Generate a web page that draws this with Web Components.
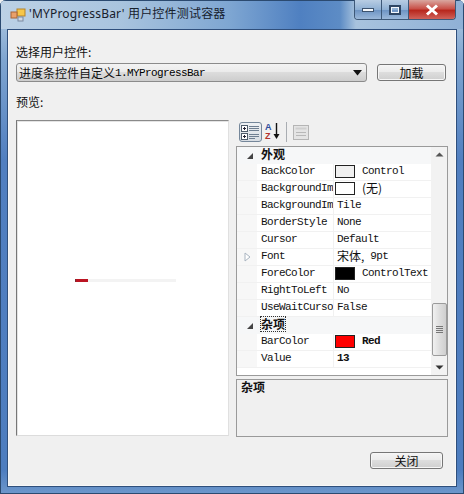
<!DOCTYPE html>
<html>
<head>
<meta charset="utf-8">
<title>MYProgressBar</title>
<style>
html, body { margin: 0; padding: 0; background: #f0f0f0; }
body { font: 11px "Liberation Mono", "Noto Sans CJK SC", monospace; letter-spacing: -0.6px; color: #000; }
</style>
</head>
<body>
<test-window>
  <span slot="title">'MYProgressBar' 用户控件测试容器</span>
  <zh-text style="display:block;height:14px">选择用户控件:</zh-text>
  <div style="display:flex;gap:10px;height:19px;margin-top:4px;padding-right:2px">
    <combo-box><zh-text>进度条控件自定义</zh-text>1.MYProgressBar</combo-box>
    <win-button style="width:69px;margin-top:1px;height:17px">加载</win-button>
  </div>
  <zh-text style="margin-top:13px;display:block;height:14px">预览:</zh-text>
  <div style="display:flex;gap:7px;height:316px;margin-top:11px">
    <preview-pane><progress-line value="13"></progress-line></preview-pane>
    <div style="width:212px;display:flex;flex-direction:column">
      <grid-toolbar></grid-toolbar>
      <prop-grid>
        <prop-cat open>外观</prop-cat>
        <prop-row name="BackColor" swatch="#f0f0f0">Control</prop-row>
        <prop-row name="BackgroundIm" swatch="#ffffff"><zh-text>(无)</zh-text></prop-row>
        <prop-row name="BackgroundIm">Tile</prop-row>
        <prop-row name="BorderStyle">None</prop-row>
        <prop-row name="Cursor">Default</prop-row>
        <prop-row name="Font" expand><zh-text>宋体,</zh-text> 9pt</prop-row>
        <prop-row name="ForeColor" swatch="#000000">ControlText</prop-row>
        <prop-row name="RightToLeft">No</prop-row>
        <prop-row name="UseWaitCurso">False</prop-row>
        <prop-cat open focus>杂项</prop-cat>
        <prop-row name="BarColor" swatch="#ff0000" strong>Red</prop-row>
        <prop-row name="Value" strong>13</prop-row>
      </prop-grid>
      <help-pane><zh-text style="font-weight:700">杂项</zh-text></help-pane>
    </div>
  </div>
  <div style="display:flex;justify-content:flex-end;margin-top:16px;padding-right:5px">
    <win-button style="width:73px;height:17px">关闭</win-button>
  </div>
</test-window>

<script>
const ZH = '"Noto Sans CJK SC", "Noto Sans", sans-serif';

class ZhText extends HTMLElement {
  constructor() {
    super();
    this.attachShadow({ mode: 'open' });
    this.shadowRoot.innerHTML = `<style>:host{font:12px/14px ${ZH};letter-spacing:0;color:#111}</style><slot></slot>`;
  }
}
customElements.define('zh-text', ZhText);

class TestWindow extends HTMLElement {
  constructor() {
    super();
    this.attachShadow({ mode: 'open' });
    this.shadowRoot.innerHTML = `
<style>
:host {
  display: flex; flex-direction: column;
  width: 464px; height: 494px; box-sizing: border-box;
  background: linear-gradient(180deg, #b7cee4 0, #7fa5d0 60px, #517fc0 160px, #4d7dbf 470px, #6d97cb 100%);
  box-shadow: inset 0 0 0 1px #2b4a70;
  border-radius: 6px 6px 0 0;
  overflow: hidden;
}
#bar {
  height: 29px; flex: none; display: flex; align-items: flex-start;
  background: linear-gradient(90deg, #bcd1e5 0, #a9c4de 120px, #7ea6d2 230px, #4f80c1 300px, #5d8cc5 340px, #a8c3de 356px, #8fb0d6 100%);
  box-shadow: inset 1px 0 0 #2b4a70, inset -1px 0 0 #2b4a70, inset 0 1px 0 #2b4a70;
}
#icon { margin: 8px 0 0 10px; flex: none; }
#title { margin: 7px 0 0 3px; font: 12px/14px "Noto Sans", ${ZH}; letter-spacing: 0.2px; color: #16202c; white-space: nowrap; }
#ctl { margin: 0 8px 0 auto; display: flex; height: 20px; border: 1px solid #3d5878; border-top: 0; border-radius: 0 0 4px 4px; overflow: hidden; box-sizing: border-box; }
#ctl div { height: 100%; display: flex; align-items: center; justify-content: center; box-sizing: border-box; }
#min, #max { width: 27px; background: linear-gradient(180deg, #b8cde3, #8fb0d4 50%, #6f95c4 55%, #9bb8da); border-right: 1px solid #3d5878; }
#close { width: 46px; background: linear-gradient(180deg, #d9a7a0, #c9524a 45%, #b8281e 55%, #d0625a); }
#client {
  flex: 1; margin: 0 7px 7px 7px; border: 1px solid #2f4f7c; background: #f0f0f0;
  padding: 15px 0 0 8px; box-sizing: border-box; display: flex; flex-direction: column;
  box-shadow: inset -1px -1px 0 #f8f8f8, inset 1px 0 0 #f6f6f6;
  height: 458px; width: 450px;
}
.content { width: 432px; }
</style>
<div id="bar">
  <svg id="icon" width="16" height="14" viewBox="0 0 16 14">
    <rect x="7" y="1" width="8" height="7" fill="#f6c648" stroke="#b5832a"/>
    <rect x="1" y="4" width="6" height="6" fill="#e9a06a" stroke="#a76436"/>
    <rect x="8" y="9" width="5" height="4" fill="#cfd8e4" stroke="#7b8a9f"/>
  </svg>
  <div id="title"><slot name="title"></slot></div>
  <div id="ctl">
    <div id="min"><svg width="12" height="6"><rect x="0.5" y="1.5" width="11" height="3" fill="#f4f7fb" stroke="#3c536f"/></svg></div>
    <div id="max"><svg width="12" height="10"><rect x="1" y="1" width="10" height="8" fill="none" stroke="#2f4664" stroke-width="2"/><rect x="2.5" y="2.5" width="7" height="5" fill="none" stroke="#f2f6fb"/></svg></div>
    <div id="close"><svg width="14" height="12"><path d="M2 1.5 L12 10.5 M12 1.5 L2 10.5" stroke="#fff" stroke-width="3"/></svg></div>
  </div>
</div>
<div id="client"><div class="content"><slot></slot></div></div>`;
  }
}
customElements.define('test-window', TestWindow);

class ComboBox extends HTMLElement {
  constructor() {
    super();
    this.attachShadow({ mode: 'open' });
    this.shadowRoot.innerHTML = `
<style>
:host {
  display: flex; align-items: center; flex: none; width: 351px; height: 19px; box-sizing: border-box;
  border: 1px solid #8b8b8b; border-radius: 3px; padding-left: 2px; white-space: nowrap;
  background: linear-gradient(180deg, #f3f3f3 0, #ebebeb 45%, #dcdcdc 50%, #cdcdcd 100%);
}
svg { margin-left: auto; margin-right: 4px; }
</style><slot></slot><svg width="9" height="6"><path d="M0 0 H9 L4.5 5.5 Z" fill="#111"/></svg>`;
  }
}
customElements.define('combo-box', ComboBox);

class WinButton extends HTMLElement {
  constructor() {
    super();
    this.attachShadow({ mode: 'open' });
    this.shadowRoot.innerHTML = `
<style>
:host {
  display: flex; align-items: center; justify-content: center; flex: none; box-sizing: border-box;
  border: 1px solid #767676; border-radius: 3px;
  font: 12px/14px ${ZH}; letter-spacing: 0; color: #111;
  background: linear-gradient(180deg, #f4f4f4 0, #ececec 45%, #dddddd 50%, #cfcfcf 100%);
  box-shadow: inset 0 0 0 1px #f6f6f6;
}
</style><slot></slot>`;
  }
}
customElements.define('win-button', WinButton);

class PreviewPane extends HTMLElement {
  constructor() {
    super();
    this.attachShadow({ mode: 'open' });
    this.shadowRoot.innerHTML = `
<style>
:host {
  display: block; width: 213px; height: 316px; flex: none; box-sizing: border-box; background: #fff;
  border: 1px solid; border-color: #8a8a8a #e0e0e0 #dcdcdc #777;
  box-shadow: inset 1px 1px 0 #e4e4e4;
  padding: 158px 0 0 58px;
}
</style><slot></slot>`;
  }
}
customElements.define('preview-pane', PreviewPane);

class ProgressLine extends HTMLElement {
  constructor() {
    super();
    this.attachShadow({ mode: 'open' });
    this.shadowRoot.innerHTML = `
<style>
:host { display: block; width: 101px; height: 3px; background: #f3f3f3; }
#fill { height: 100%; background: #bb1422; border-left: 1px solid #7d2a30; box-sizing: border-box; }
</style><div id="fill"></div>`;
  }
  connectedCallback() {
    this.shadowRoot.querySelector('#fill').style.width = this.getAttribute('value') + '%';
  }
}
customElements.define('progress-line', ProgressLine);

class GridToolbar extends HTMLElement {
  constructor() {
    super();
    this.attachShadow({ mode: 'open' });
    this.shadowRoot.innerHTML = `
<style>
:host { display: flex; align-items: flex-start; height: 26px; flex: none; padding: 2px 0 0 3px; box-sizing: border-box; }
#cat { width: 23px; height: 20px; box-sizing: border-box; border: 1px solid #75879a; border-radius: 3px; background: linear-gradient(180deg, #eef1f4, #d8dde3); display: flex; align-items: center; justify-content: center; }
#az { width: 17px; height: 20px; margin-left: 2px; position: relative; font: 700 9px/9px "Liberation Sans", sans-serif; letter-spacing: 0; padding-top: 1px; box-sizing: border-box; }
#az b { display: block; padding-left: 1px; height: 9px; overflow: hidden; }
#az b:first-child { color: #2d4c9c; } #az b:nth-child(2) { color: #b3332c; }
#az svg { position: absolute; left: 9px; top: 1px; }
#sep { width: 1px; height: 20px; background: #a9adb2; margin: 0 6px 0 5px; }
#off { margin-top: 3px; }
</style>
<div id="cat"><svg width="19" height="16" viewBox="0 0 19 16">
  <rect x="0.5" y="1.5" width="6" height="6" fill="#fff" stroke="#4f5c6b"/><path d="M2 4.5h3M3.5 3v3" stroke="#223"/>
  <rect x="0.5" y="9.5" width="6" height="6" fill="#fff" stroke="#4f5c6b"/><path d="M2 12.5h3M3.5 11v3" stroke="#223"/>
  <path d="M8 2.5h10M8 4.5h10M8 6.5h10M8 10.5h10M8 12.5h10M8 14.5h6" stroke="#6f7f91"/>
</svg></div>
<div id="az"><b>A</b><b>Z</b><svg width="7" height="17"><path d="M3.5 0 V13" stroke="#111" stroke-width="1.4"/><path d="M0.5 11 H6.5 L3.5 16 Z" fill="#111"/></svg></div>
<div id="sep"></div>
<svg id="off" width="16" height="15"><rect x="0.5" y="0.5" width="15" height="14" fill="#e4e4e4" stroke="#b5b5b5"/><rect x="2.5" y="2.5" width="11" height="2" fill="#cfcfcf"/><path d="M3 7.5h10M3 10.5h10" stroke="#b8b8b8"/></svg>`;
  }
}
customElements.define('grid-toolbar', GridToolbar);

class PropGrid extends HTMLElement {
  constructor() {
    super();
    this.attachShadow({ mode: 'open' });
    this.shadowRoot.innerHTML = `
<style>
:host { display: flex; height: 230px; flex: none; box-sizing: border-box; border: 1px solid #9a9a9a; background: #fff; width: 212px; }
#rows { width: 194px; flex: none; }
#bar { width: 16px; flex: none; background: #f2f2f2; display: flex; flex-direction: column; align-items: center; }
#up { margin-top: 5px; }
#thumb { width: 15px; height: 53px; margin-top: 146px; box-sizing: border-box; border: 1px solid #9b9b9b; border-radius: 2px; background: linear-gradient(90deg, #f1f1f1, #dedede 50%, #cfcfcf); display: flex; align-items: center; justify-content: center; }
#down { margin-top: 9px; }
</style>
<div id="rows"><slot></slot></div>
<div id="bar">
  <svg id="up" width="9" height="5"><path d="M0.5 4.5 H8.5 L4.5 0.5 Z" fill="#555"/></svg>
  <div id="thumb"><svg width="9" height="9"><path d="M1 1.5h7M1 3.5h7M1 5.5h7M1 7.5h7" stroke="#777"/></svg></div>
  <svg id="down" width="9" height="5"><path d="M0.5 0.5 H8.5 L4.5 4.5 Z" fill="#333"/></svg>
</div>`;
  }
}
customElements.define('prop-grid', PropGrid);

class PropCat extends HTMLElement {
  constructor() {
    super();
    this.attachShadow({ mode: 'open' });
    this.shadowRoot.innerHTML = `
<style>
:host { display: flex; height: 17px; align-items: center; background: #f6f7f8; font: 700 12px/14px ${ZH}; letter-spacing: 0; color: #111; }
#g { width: 24px; flex: none; display: flex; justify-content: center; padding-left: 1px; box-sizing: border-box; }
#t { margin-top: -3px; height: 14px; }
:host([focus]) #t { outline: 1px dotted #333; }
</style>
<div id="g"><svg width="8" height="8"><path d="M7 1 V7 H1 Z" fill="#444"/></svg></div><div id="t"><slot></slot></div>`;
  }
}
customElements.define('prop-cat', PropCat);

class PropRow extends HTMLElement {
  constructor() {
    super();
    this.attachShadow({ mode: 'open' });
    this.shadowRoot.innerHTML = `
<style>
:host { display: grid; grid-template-columns: 20px 77px 97px; height: 17px; box-sizing: border-box; border-bottom: 1px solid #f1f1f1; color: #111; }
#g { background: #f7f7f7; display: flex; align-items: center; justify-content: center; }
#n { padding-left: 4px; line-height: 15px; overflow: hidden; white-space: nowrap; border-right: 1px solid #f1f1f1; box-sizing: border-box; }
#v { padding-left: 3px; line-height: 15px; display: flex; align-items: flex-start; white-space: pre; overflow: hidden; }
#s { width: 20px; height: 13px; box-sizing: border-box; border: 1px solid #222; margin: 1px 7px 0 -2px; flex: none; display: none; }
:host([swatch]) #s { display: block; }
:host([strong]) #v { font-weight: 700; }
</style>
<div id="g"></div><div id="n"></div><div id="v"><div id="s"></div><slot></slot></div>`;
  }
  connectedCallback() {
    this.shadowRoot.querySelector('#n').textContent = this.getAttribute('name');
    if (this.hasAttribute('swatch')) {
      this.shadowRoot.querySelector('#s').style.background = this.getAttribute('swatch');
    }
    if (this.hasAttribute('expand')) {
      this.shadowRoot.querySelector('#g').innerHTML = '<svg width="7" height="10"><path d="M1 1 L6 5 L1 9 Z" fill="#fff" stroke="#a9b4c0"/></svg>';
    }
  }
}
customElements.define('prop-row', PropRow);

class HelpPane extends HTMLElement {
  constructor() {
    super();
    this.attachShadow({ mode: 'open' });
    this.shadowRoot.innerHTML = `
<style>
:host { display: block; height: 58px; margin-top: 3px; flex: none; box-sizing: border-box; border: 1px solid #9a9a9a; background: #f0f0f0; padding: 0 0 0 4px; width: 212px; }
</style><slot></slot>`;
  }
}
customElements.define('help-pane', HelpPane);
</script>
</body>
</html>
